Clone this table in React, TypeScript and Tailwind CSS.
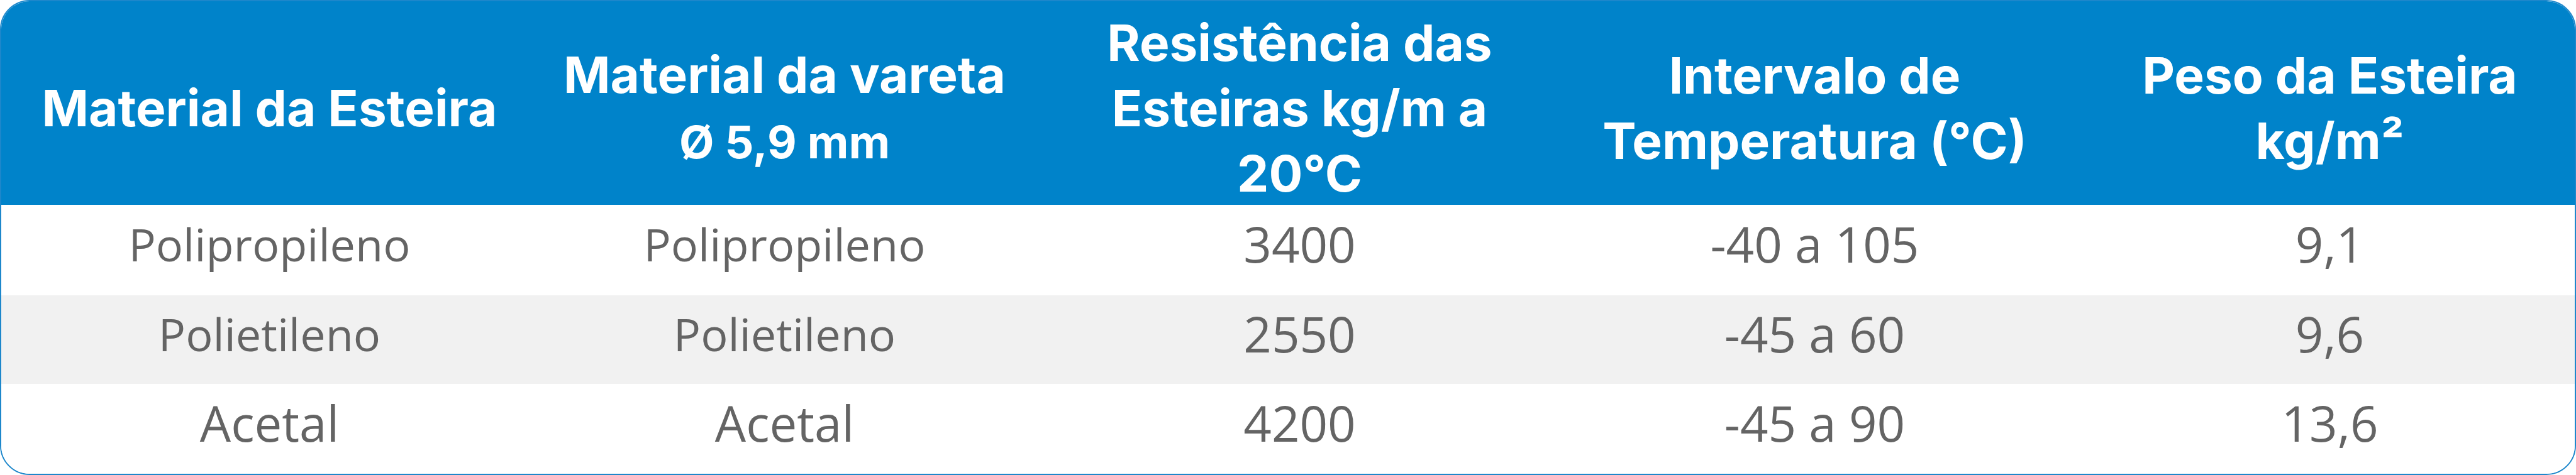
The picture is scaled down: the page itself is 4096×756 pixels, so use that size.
const headers: React.ReactNode[] = [
  <>Material da Esteira</>,
  <>
    Material da vareta
    <br />
    <span className="text-[72px]">Ø 5,9 mm</span>
  </>,
  <>
    Resistência das
    <br />
    Esteiras kg/m a
    <br />
    20°C
  </>,
  <>
    Intervalo de
    <br />
    Temperatura (°C)
  </>,
  <>
    Peso da Esteira
    <br />
    kg/m²
  </>,
];

const rows = [
  { h: "h-[144px]", bg: "bg-white", name: "text-[72px]", cells: ["Polipropileno", "Polipropileno", "3400", "-40 a 105", "9,1"] },
  { h: "h-[141px]", bg: "bg-[#f1f1f1]", name: "text-[72px]", cells: ["Polietileno", "Polietileno", "2550", "-45 a 60", "9,6"] },
  { h: "h-[143px]", bg: "bg-white", name: "text-[78px]", cells: ["Acetal", "Acetal", "4200", "-45 a 90", "13,6"] },
];

export default function App() {
  return (
    <div className="w-[4096px] h-[756px] bg-white">
      <div className="h-full rounded-[47px] border-2 border-[#1d87cb] overflow-hidden flex flex-col">
        {/* header */}
        <div className="h-[324px] shrink-0 bg-[#0083ca] pl-[17px] pt-[14px] grid grid-cols-[repeat(5,819px)] items-center font-['Inter',sans-serif] font-bold text-white text-[80px] leading-[104px] text-center">
          {headers.map((h, i) => (
            <div key={i}>{h}</div>
          ))}
        </div>

        {/* body */}
        {rows.map((r, ri) => (
          <div
            key={ri}
            className={`${r.h} ${r.bg} shrink-0 pl-[17px] pb-[20px] grid grid-cols-[repeat(5,819px)] items-center text-center text-[#646464] font-['Open_Sans',sans-serif] leading-none`}
          >
            {r.cells.map((c, ci) => (
              <div key={ci} className={ci < 2 ? r.name : "text-[78px]"}>
                {c}
              </div>
            ))}
          </div>
        ))}
      </div>
    </div>
  );
}
